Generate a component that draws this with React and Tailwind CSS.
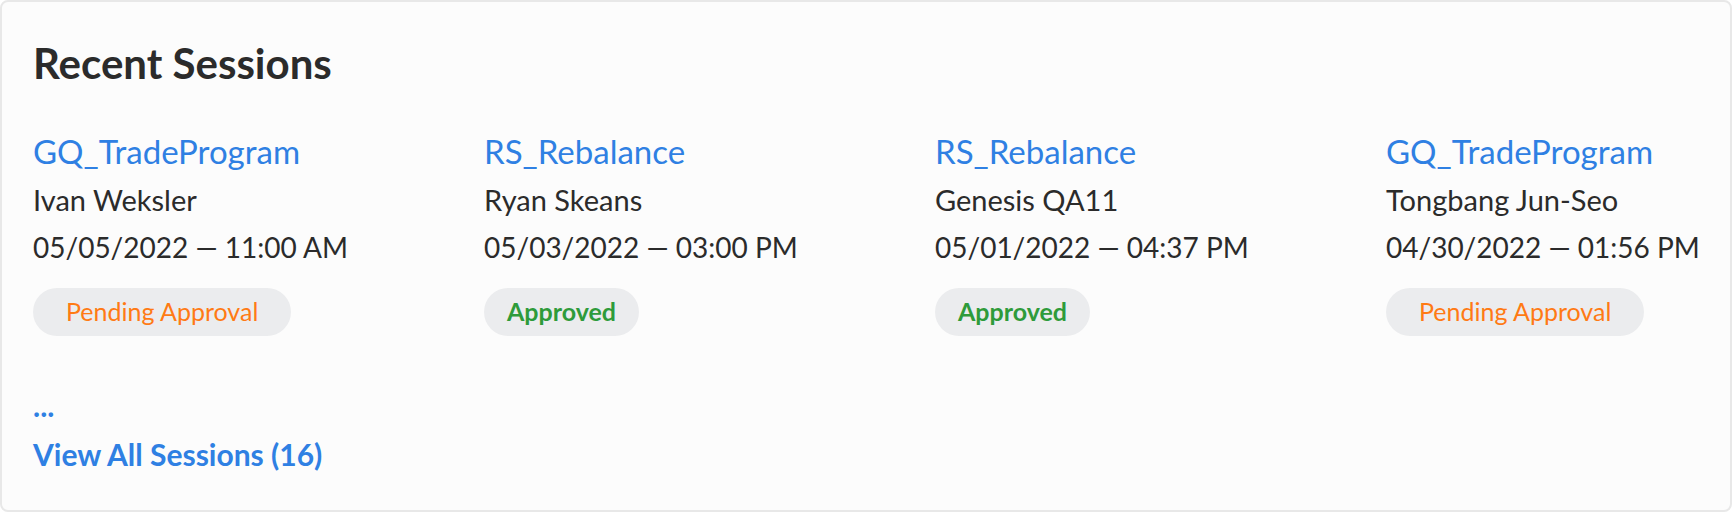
import React from 'react';

const sessions = [
  { name: 'GQ_TradeProgram', user: 'Ivan Weksler', when: '05/05/2022 — 11:00 AM', status: 'pending' },
  { name: 'RS_Rebalance', user: 'Ryan Skeans', when: '05/03/2022 — 03:00 PM', status: 'approved' },
  { name: 'RS_Rebalance', user: 'Genesis QA11', when: '05/01/2022 — 04:37 PM', status: 'approved' },
  { name: 'GQ_TradeProgram', user: 'Tongbang Jun-Seo', when: '04/30/2022 — 01:56 PM', status: 'pending' },
];

function StatusBadge({ status }) {
  if (status === 'approved') {
    return (
      <span className="inline-flex h-[48px] items-center rounded-full bg-[#ebecee] px-[23px] text-[25px] font-bold text-[#2e9b3a]">
        Approved
      </span>
    );
  }
  return (
    <span className="inline-flex h-[48px] items-center rounded-full bg-[#ebecee] px-[33px] text-[25px] text-[#ff7a14]">
      Pending Approval
    </span>
  );
}

export default function App() {
  return (
    <div className="h-[512px] w-[1732px] bg-white font-['Lato',sans-serif]">
      <div className="h-full rounded-lg border-2 border-[#e8e8e8] bg-[#fcfcfc] px-[31px] pt-[37px] text-[#2b2b2b]">
        <h2 className="text-[42px] font-bold leading-[48px]">Recent Sessions</h2>

        <div className="mt-[44px] grid grid-cols-[repeat(4,313px)] gap-x-[138px] whitespace-nowrap">
          {sessions.map((s, i) => (
            <div key={i} className="flex flex-col items-start">
              <a className="text-[33px] leading-[40px] text-[#2f80e3]">{s.name}</a>
              <div className="mt-[11px] text-[29px] leading-[36px]">{s.user}</div>
              <div className="mt-[11px] text-[28px] leading-[36px]">{s.when}</div>
              <div className="mt-[23px]">
                <StatusBadge status={s.status} />
              </div>
            </div>
          ))}
        </div>

        <div className="mt-[45px] text-[30px] font-bold leading-[49px] text-[#2f80e3]">
          <div>...</div>
          <a>View All Sessions (16)</a>
        </div>
      </div>
    </div>
  );
}
